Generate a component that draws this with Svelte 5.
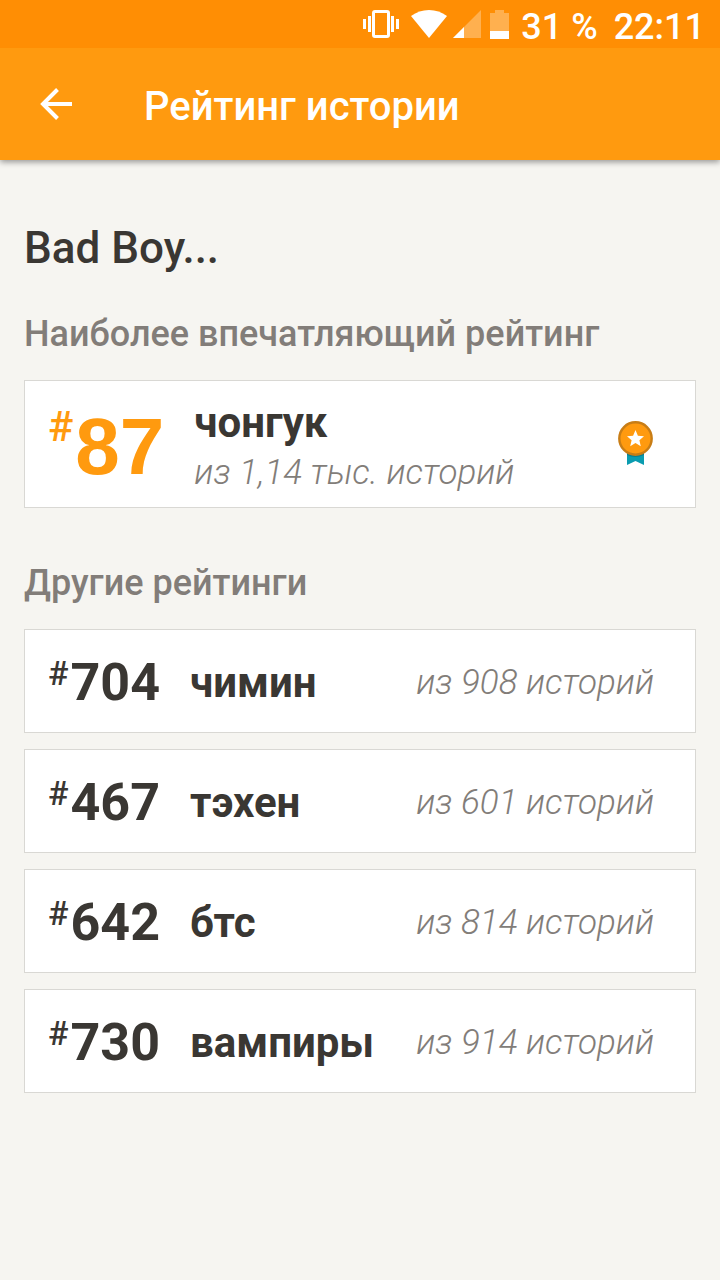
<script lang="ts">
  type Ranking = { rank: number; tag: string; total: string };

  const story = 'Bad Boy...';

  const best: Ranking = { rank: 87, tag: 'чонгук', total: '1,14 тыс.' };

  const others: Ranking[] = [
    { rank: 704, tag: 'чимин', total: '908' },
    { rank: 467, tag: 'тэхен', total: '601' },
    { rank: 642, tag: 'бтс', total: '814' },
    { rank: 730, tag: 'вампиры', total: '914' }
  ];
</script>

<div class="screen">
  <div class="status">
    <svg class="vibrate" viewBox="0 0 36 28" width="36" height="28" aria-hidden="true">
      <rect x="10.5" y="1.5" width="15" height="25" rx="1.5" fill="none" stroke="#fff" stroke-width="3" />
      <path d="M1.5 9v10M6.5 6v16M29.5 6v16M34.5 9v10" stroke="#fff" stroke-width="3" />
    </svg>
    <svg class="wifi" viewBox="0 0 36 28" width="36" height="28" aria-hidden="true">
      <path d="M0 6Q8 0 18 0T36 6L18 28Z" fill="#fff" />
    </svg>
    <svg class="signal" viewBox="0 0 28 28" width="28" height="28" aria-hidden="true">
      <path d="M28 0V28H0Z" fill="#fff" opacity="0.3" />
      <path d="M11 17V28H0Z" fill="#fff" />
    </svg>
    <svg class="battery" viewBox="0 0 19 29" width="19" height="29" aria-hidden="true">
      <path d="M5 0H14V3H19V21H0V3H5Z" fill="#fff" opacity="0.3" />
      <path d="M0 21H19V29H0Z" fill="#fff" />
    </svg>
    <span class="charge">31 %</span>
    <span>22:11</span>
  </div>

  <header>
    <button class="back" aria-label="Назад">
      <svg viewBox="0 0 32 32" width="32" height="32" aria-hidden="true">
        <path d="M32 16H3M17.5 1.5L3 16L17.5 30.5" fill="none" stroke="#fff" stroke-width="4" />
      </svg>
    </button>
    <h1>Рейтинг истории</h1>
  </header>

  <main>
    <h2>{story}</h2>

    <section>
      <h3>Наиболее впечатляющий рейтинг</h3>
      <article class="card best">
        <div class="rank"><span class="hash">#</span>{best.rank}</div>
        <div class="info">
          <strong class="tag">{best.tag}</strong>
          <em class="total">из {best.total} историй</em>
        </div>
        <svg class="medal" viewBox="0 0 36 45" width="36" height="45" aria-hidden="true">
          <path d="M9 28H26V44L17.5 40L9 44Z" fill="#0a9cb0" />
          <path d="M9 31H26V34Q17 38 9 34Z" fill="#087f91" />
          <circle cx="17.5" cy="17.5" r="16.2" fill="#ff9a0f" stroke="#c87d16" stroke-width="2.4" />
          <path d="M17.5 9L19.9 14.7L26 15.2L21.4 19.2L22.8 25.2L17.5 22L12.2 25.2L13.6 19.2L9 15.2L15.1 14.7Z" fill="#fff" />
        </svg>
      </article>
    </section>

    <section>
      <h3>Другие рейтинги</h3>
      <ul>
        {#each others as item (item.tag)}
          <li class="card">
            <div class="rank"><span class="hash">#</span>{item.rank}</div>
            <strong class="tag">{item.tag}</strong>
            <em class="total">из {item.total} историй</em>
          </li>
        {/each}
      </ul>
    </section>
  </main>
</div>

<style>
  :global(body) {
    margin: 0;
    background: #f6f5f1;
  }

  .screen {
    min-height: 100vh;
    background: #f6f5f1;
    color: #3a3733;
    font-family: Roboto, 'Liberation Sans', sans-serif;
  }

  .status {
    position: relative;
    z-index: 1;
    display: flex;
    align-items: center;
    justify-content: flex-end;
    height: 48px;
    padding: 0 15px;
    background: #ff8e04;
    color: #fff;
    font-size: 36px;
    font-weight: 500;
    white-space: nowrap;
  }

  .status span {
    padding-top: 6px;
  }

  .vibrate {
    margin-right: 12px;
  }

  .wifi {
    margin-right: 6px;
  }

  .signal {
    margin-right: 9px;
  }

  .battery {
    margin-right: 12px;
  }

  .charge {
    margin-right: 16px;
  }

  header {
    display: flex;
    align-items: center;
    gap: 72px;
    height: 112px;
    padding: 0 40px;
    background: #ff9a0f;
    box-shadow: 0 2px 6px rgba(0, 0, 0, 0.4);
    color: #fff;
  }

  .back {
    display: flex;
    padding: 0;
    border: 0;
    background: none;
    cursor: pointer;
  }

  h1 {
    margin: 0;
    padding-top: 6px;
    font-size: 40px;
    font-weight: 500;
    line-height: 48px;
  }

  main {
    padding: 60px 24px;
  }

  h2 {
    margin: 0 0 34px;
    font-size: 44px;
    font-weight: 500;
    line-height: 56px;
  }

  h3 {
    margin: 0 0 22px;
    color: #827d79;
    font-size: 36px;
    font-weight: 500;
    line-height: 48px;
  }

  section + section {
    margin-top: 51px;
  }

  ul {
    display: grid;
    gap: 16px;
    margin: 0;
    padding: 0;
    list-style: none;
  }

  .card {
    display: flex;
    align-items: center;
    box-sizing: border-box;
    min-height: 104px;
    padding: 4px 41px 0 23px;
    border: 1px solid #d9d8d4;
    background: #fff;
  }

  .rank {
    display: flex;
    align-items: flex-start;
    gap: 2px;
    margin-right: 30px;
    font-size: 52px;
    font-weight: 700;
    line-height: 60px;
  }

  .hash {
    font-size: 34px;
    font-weight: 500;
    line-height: 40px;
  }

  .tag {
    font-size: 42px;
    font-weight: 700;
    line-height: 52px;
  }

  .total {
    margin-left: auto;
    color: #827d79;
    font-size: 35px;
    font-weight: 300;
    line-height: 48px;
    white-space: nowrap;
  }

  .best {
    min-height: 128px;
    padding-top: 6px;
  }

  .best .rank {
    color: #ff9a0f;
    font-size: 80px;
    font-family: 'Liberation Sans', Arial, sans-serif;
    line-height: 92px;
  }

  .best .hash {
    font-family: Roboto, 'Liberation Sans', sans-serif;
    font-size: 42px;
    line-height: 52px;
  }

  .info {
    display: grid;
  }

  .info .total {
    margin-left: 0;
  }

  .medal {
    margin-left: auto;
    padding-bottom: 8px;
  }
</style>
